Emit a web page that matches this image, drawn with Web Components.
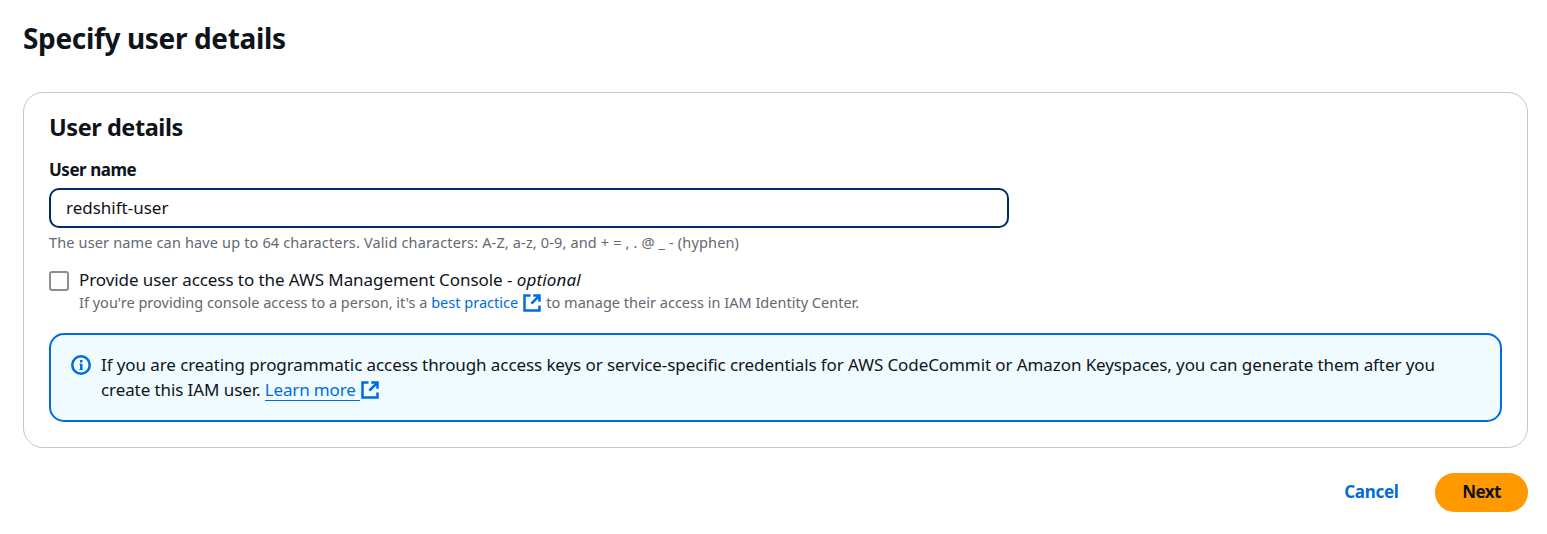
<!DOCTYPE html>
<html lang="en">
<head>
<meta charset="utf-8">
<title>Specify user details</title>
<style>
html, body { margin: 0; background: #fff; }
body { font-family: "Noto Sans", "Open Sans", sans-serif; font-size: 17px; line-height: 25px; color: #0f141a; }
</style>
</head>
<body>
<user-details-page></user-details-page>
<script>
const define = (name, html) => {
  const template = document.createElement('template');
  template.innerHTML = html;
  customElements.define(name, class extends HTMLElement {
    connectedCallback() {
      if (this.shadowRoot) return;
      this.attachShadow({ mode: 'open' }).append(template.content.cloneNode(true));
    }
  });
};

define('external-icon', `
<style>
:host { display: inline-block; width: 20px; height: 20px; color: #006ce0; vertical-align: top; }
svg { display: block; width: 20px; height: 20px; fill: none; stroke: currentColor; stroke-width: 2; }
</style>
<svg viewBox="0 0 16 16"><path d="M6.8 2H2v12h12V10M9 2h5v5M7.5 8.5 14 2"/></svg>`);

define('info-icon', `
<style>
:host { display: block; width: 20px; height: 20px; color: #006ce0; }
svg { display: block; width: 20px; height: 20px; fill: none; stroke: currentColor; stroke-width: 2; }
</style>
<svg viewBox="0 0 16 16"><circle cx="8" cy="8" r="7"/><path d="M8.2 12V7M8.2 6V4"/><path d="M6.8 7.4H8M6.8 11.6h2.8" stroke-width=".8"/></svg>`);

define('page-heading', `
<style>
:host { display: block; }
h1 { margin: 0; font-size: 28px; line-height: 38px; font-weight: 700; letter-spacing: -.35px; }
</style>
<h1><slot></slot></h1>`);

define('section-card', `
<style>
:host { display: block; box-sizing: border-box; border: 1px solid #c6c6cd; border-radius: 20px; padding: 19px 25px 25px; }
h2 { margin: 0 0 15px; font-size: 23.5px; line-height: 30px; font-weight: 700; letter-spacing: -.45px; }
</style>
<h2><slot name="title"></slot></h2><slot></slot>`);

define('text-field', `
<style>
:host { display: block; }
.label { font-weight: 700; letter-spacing: -.48px; margin-bottom: 6px; }
.input { box-sizing: border-box; width: 960px; height: 40px; border: 2px solid #002b66; border-radius: 10px; padding: 5px 15px; background: #fff; }
.hint { margin-top: 4px; font-size: 14.5px; line-height: 20px; letter-spacing: .15px; color: #656871; }
</style>
<div class="label"><slot name="label"></slot></div>
<div class="input"><slot></slot></div>
<div class="hint"><slot name="hint"></slot></div>`);

define('check-option', `
<style>
:host { display: flex; gap: 10px; margin-top: 15px; }
.box { box-sizing: border-box; flex: none; width: 20px; height: 20px; margin-top: 4px; border: 2px solid #8c8c94; border-radius: 3px; background: #fff; }
.label { height: 25px; letter-spacing: -.07px; white-space: nowrap; }
.hint { height: 20px; font-size: 14.5px; line-height: 20px; letter-spacing: .01px; color: #656871; white-space: nowrap; }
</style>
<div class="box"></div>
<div><div class="label"><slot name="label"></slot></div><div class="hint"><slot></slot></div></div>`);

define('text-link', `
<style>
:host { color: #006ce0; }
:host([underlined]) span { border-bottom: 1px solid #006ce0; letter-spacing: -.15px; display: inline-block; height: 23px; white-space: pre; vertical-align: top; }
external-icon { margin: 1px .7px 0 3.7px; }
:host([underlined]) external-icon { margin: 3px 0 0 .5px; }
</style><span><slot></slot></span><external-icon></external-icon>`);

define('info-alert', `
<style>
:host { display: flex; gap: 10px; box-sizing: border-box; height: 89px; margin-top: 21px; padding: 17px 20px; border: 2px solid #006ce0; border-radius: 15px; background: #f0fbff; }
info-icon { flex: none; margin-top: 3px; }
</style>
<info-icon></info-icon><div><slot></slot></div>`);

define('action-button', `
<style>
:host { display: block; }
button { box-sizing: border-box; height: 39px; border: 0; border-radius: 20px; padding: 6px 27.5px 8px; background: transparent; color: #006ce0; font: inherit; font-weight: 700; letter-spacing: -.3px; }
:host([primary]) button { width: 93px; padding-inline: 0; background: #ff9900; color: #0f141a; letter-spacing: -.6px; }
</style>
<button type="button"><slot></slot></button>`);

define('user-details-page', `
<style>
:host { display: block; padding: 19px 19px 22px 23px; }
section-card { margin-top: 35px; }
i { letter-spacing: .15px; }
.line { display: block; white-space: nowrap; letter-spacing: -.09px; }
footer { display: flex; justify-content: flex-end; gap: 9px; margin-top: 25px; }
</style>
<page-heading>Specify user details</page-heading>
<section-card>
  <span slot="title">User details</span>
  <text-field><span slot="label">User name</span>redshift-user<span slot="hint">The user name can have up to 64 characters. Valid characters: A-Z, a-z, 0-9, and + = , . @ _ - (hyphen)</span></text-field>
  <check-option><span slot="label">Provide user access to the AWS Management Console - <i>optional</i></span>If you're providing console access to a person, it's a <text-link>best practice</text-link> to manage their access in IAM Identity Center.</check-option>
  <info-alert><span class="line">If you are creating programmatic access through access keys or service-specific credentials for AWS CodeCommit or Amazon Keyspaces, you can generate them after you</span><span class="line">create this IAM user. <text-link underlined>Learn more </text-link></span></info-alert>
</section-card>
<footer><action-button>Cancel</action-button><action-button primary>Next</action-button></footer>`);
</script>
</body>
</html>
